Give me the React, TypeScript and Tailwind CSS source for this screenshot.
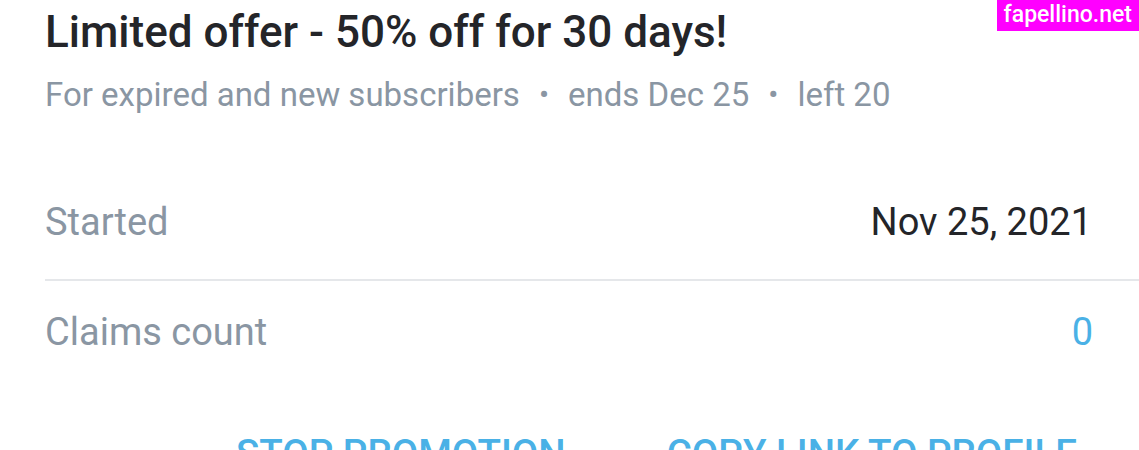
export default function App() {
  return (
    <div className="relative w-[1139px] h-[450px] overflow-hidden bg-white font-['Roboto',sans-serif]">
      <div className="absolute right-0 top-0 flex h-[31px] items-center bg-[#ff00ff] pl-[7px] pr-[7px] text-[23px] font-medium text-white">
        fapellino.net
      </div>
      <div className="pl-[45px] pt-[7px]">
        <h1 className="text-[44px] font-medium leading-[50px] text-[#242529]">
          Limited offer - 50% off for 30 days!
        </h1>
        <p className="mt-[18px] flex items-center text-[33px] leading-[40px] text-[#8a96a3]">
          <span>For expired and new subscribers</span>
          <span className="mx-[19px] text-[30px]">•</span>
          <span>ends Dec 25</span>
          <span className="mx-[19px] text-[30px]">•</span>
          <span>left 20</span>
        </p>
        <div className="mt-[82px] flex items-center justify-between pr-[47px] text-[38px] leading-[50px]">
          <span className="text-[#8a96a3]">Started</span>
          <span className="text-[#242529]">Nov 25, 2021</span>
        </div>
        <div className="mt-[32px] h-[2px] bg-[#e5e7ea]" />
        <div className="mt-[26px] flex items-center justify-between pr-[46px] text-[38px] leading-[50px]">
          <span className="text-[#8a96a3]">Claims count</span>
          <span className="text-[#4ab1e6]">0</span>
        </div>
        <div className="mt-[77px] flex justify-end gap-[101px] pr-[62px] text-[38.5px] font-medium leading-[40px] text-[#4ab1e6]">
          <span>STOP PROMOTION</span>
          <span>COPY LINK TO PROFILE</span>
        </div>
      </div>
    </div>
  );
}
